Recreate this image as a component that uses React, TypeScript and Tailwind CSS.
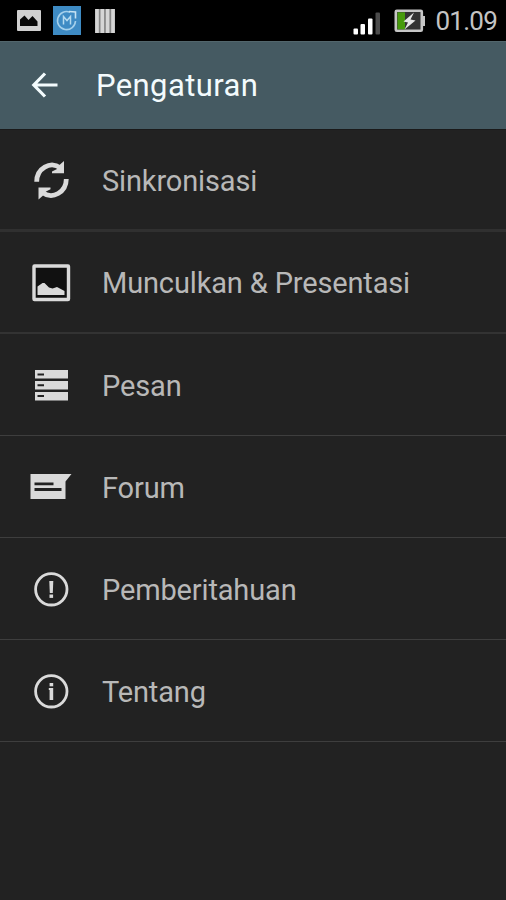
import { type ReactNode } from 'react';

interface SettingItem {
  label: string;
  divider: string;
  icon: ReactNode;
}

// All row icons share a 48x48 box centred on the row.
const items: SettingItem[] = [
  {
    label: 'Sinkronisasi',
    divider: 'border-b-[3px] border-[#303030]',
    icon: (
      <>
        <path d="M9.700 25.800A15.200 16.500 0 0 1 33.500 12" fill="none" stroke="#dadada" strokeWidth="4.800" />
        <path d="M37 5V17.300H25V15.500L30 13L33 8.500Z" />
        <path d="M39.300 23A15.200 16.500 0 0 1 15.500 36.500" fill="none" stroke="#dadada" strokeWidth="4.800" />
        <path d="M11.500 43.500V31.500H23.500V33.300L19 35.500L15.500 40Z" />
      </>
    ),
  },
  {
    label: 'Munculkan & Presentasi',
    divider: 'border-b-2 border-[#333333]',
    icon: (
      <>
        <rect x="7" y="8" width="34.500" height="33.500" rx="0.500" fill="#111" stroke="#dadada" strokeWidth="3.400" />
        <path d="M10.500 37V28.500L15.500 25H17.500L22 29.500L25.500 30.500L30 29L37.500 33V37Z" />
      </>
    ),
  },
  {
    label: 'Pesan',
    divider: 'border-b border-[#3e3e3e]',
    icon: (
      <>
        <rect x="8" y="9" width="33" height="8.500" />
        <rect x="8" y="20" width="33" height="8.500" />
        <rect x="8" y="31" width="33" height="8.500" />
        <path d="M10.500 13.500H17M10.500 24.300H17M10.500 35H17" stroke="#222" strokeWidth="2" />
      </>
    ),
  },
  {
    label: 'Forum',
    divider: 'border-b border-[#3e3e3e]',
    icon: (
      <>
        <path d="M3.500 11H44.500L38.500 18.500V36H3.500Z" />
        <path d="M7.500 20.800H26.500M7.500 26.500H34.500" stroke="#222" strokeWidth="2.800" />
      </>
    ),
  },
  {
    label: 'Pemberitahuan',
    divider: 'border-b border-[#3e3e3e]',
    icon: (
      <>
        <circle cx="24.300" cy="24.300" r="15.700" fill="none" stroke="#dadada" strokeWidth="2.800" />
        <path d="M22.300 16H26.300L25.800 28H22.800Z" />
        <rect x="22.500" y="29.500" width="3.600" height="3.400" />
      </>
    ),
  },
  {
    label: 'Tentang',
    divider: 'border-b border-[#3e3e3e]',
    icon: (
      <>
        <circle cx="24.300" cy="24.300" r="15.700" fill="none" stroke="#dadada" strokeWidth="2.800" />
        <rect x="22.600" y="16" width="3.600" height="3.300" />
        <path d="M21.800 21.100H26.200V33H22.600V23.100H21.800Z" />
      </>
    ),
  },
];

function StatusBar() {
  return (
    <div className="h-[41px] shrink-0 bg-black flex items-center">
      <svg className="ml-[17px] w-6 h-[21px]" viewBox="0 0 24 21">
        <rect width="24" height="21" rx="1" fill="#d0d0d0" />
        <path d="M3 16V9.500L7.500 5.500L11.500 10L15.500 6L20.500 11.500V16Z" fill="#080808" />
      </svg>
      <svg className="ml-3 w-7 h-[29px]" viewBox="0 0 28 29">
        <rect width="28" height="29" fill="#3e8bc4" />
        <path d="M17 6.300A9 9 0 1 0 22.500 15" fill="none" stroke="#a4d0eb" strokeWidth="1.600" />
        <path d="M16 5.500L22.500 6V12.500" fill="none" stroke="#c5e2f2" strokeWidth="1.600" />
        <path d="M10.500 18.500V10.500L14 14.500L17.500 10.500V18.500" fill="none" stroke="#b5daef" strokeWidth="1.500" />
      </svg>
      <svg className="ml-[14px] w-5 h-6" viewBox="0 0 20 24">
        <path d="M0 0H20V24H0Z" fill="#858585" />
        <path d="M2 0V24M7.300 0V24M12.600 0V24M18 0V24" stroke="#d6d6d6" strokeWidth="3.600" />
      </svg>
      <svg className="ml-auto w-7 h-6 mt-[5px]" viewBox="0 0 28 24">
        <rect x="0.500" y="17.500" width="4.500" height="6" rx="1" fill="#fff" />
        <rect x="7.500" y="13" width="4.500" height="10.500" rx="1" fill="#fff" />
        <rect x="15" y="7.500" width="4.500" height="16" rx="1" fill="#fff" />
        <rect x="22.500" y="1.500" width="4.500" height="22" rx="1" fill="#4b4b4b" />
      </svg>
      <svg className="ml-[13px] w-8 h-6" viewBox="0 0 32 24">
        <path d="M27 7H31V17H27Z" fill="#c6c6c6" />
        <rect x="1.800" y="1.800" width="26" height="20" rx="1" fill="#333" stroke="#c6c6c6" strokeWidth="2.600" />
        <rect x="3.500" y="3.300" width="7.500" height="17" fill="#479b0c" />
        <path d="M20 3.500L9.500 12.500L14 13.500L10.500 20.500L21.500 11.500L16.500 10.500Z" fill="#e6e6e6" />
      </svg>
      <span className="ml-[9px] mr-[9px] text-[26px] leading-none text-[#c4c4c4] tracking-[-0.75px]">01.09</span>
    </div>
  );
}

function Header() {
  return (
    <header className="h-[88px] shrink-0 bg-[#455a62] border-t border-[#52666c] flex items-center text-[#f3fbfd]">
      <svg className="ml-[31px] mb-0.5 w-7 h-7" viewBox="0 0 28 28" fill="none" stroke="currentColor" strokeWidth="3.200">
        <path d="M26.500 14H3M14 2.500L2.800 14L14 25.500" />
      </svg>
      <h1 className="ml-[37px] text-[31px] leading-10 tracking-[0.400px]">Pengaturan</h1>
    </header>
  );
}

function SettingRow({ item }: { item: SettingItem }) {
  return (
    <li className={`h-[102px] flex items-center ${item.divider}`}>
      <svg className="ml-[26.500px] w-12 h-12 shrink-0" viewBox="0 0 48 48" fill="#dadada">
        {item.icon}
      </svg>
      <span className="ml-[27.500px] pt-0.5 text-[29px] leading-9 tracking-[-0.150px] text-[#b8b8b8]">{item.label}</span>
    </li>
  );
}

export default function App() {
  return (
    <div className="w-[506px] h-[900px] overflow-hidden bg-[#222222] flex flex-col font-['Roboto',sans-serif]">
      <StatusBar />
      <Header />
      <ul className="border-t border-[#1a1a1a]">
        {items.map((item) => (
          <SettingRow key={item.label} item={item} />
        ))}
      </ul>
    </div>
  );
}
